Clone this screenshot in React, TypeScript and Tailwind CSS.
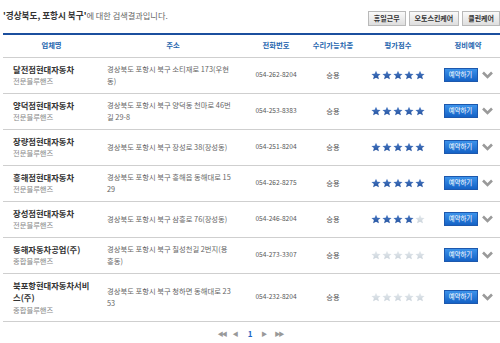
import { useId } from 'react';

type Shop = {
  name: string;
  kind: string;
  addr: string[];
  tel: string;
  car: string;
  stars: number;
};

const shops: Shop[] = [
  { name: '달전점현대자동차', kind: '전문블루핸즈', addr: ['경상북도 포항시 북구 소티재로 173(우현', '동)'], tel: '054-262-8204', car: '승용', stars: 5 },
  { name: '양덕점현대자동차', kind: '전문블루핸즈', addr: ['경상북도 포항시 북구 양덕동 천마로 46번', '길 29-8'], tel: '054-253-8383', car: '승용', stars: 5 },
  { name: '장량점현대자동차', kind: '전문블루핸즈', addr: ['경상북도 포항시 북구 장성로 38(장성동)'], tel: '054-251-8204', car: '승용', stars: 5 },
  { name: '흥해점현대자동차', kind: '전문블루핸즈', addr: ['경상북도 포항시 북구 흥해읍 동해대로 15', '29'], tel: '054-262-8275', car: '승용', stars: 5 },
  { name: '장성점현대자동차', kind: '전문블루핸즈', addr: ['경상북도 포항시 북구 삼흥로 76(장성동)'], tel: '054-246-8204', car: '승용', stars: 4 },
  { name: '동해자동차공업(주)', kind: '종합블루핸즈', addr: ['경상북도 포항시 북구 칠성천길 2번지(용', '흥동)'], tel: '054-273-3307', car: '승용', stars: 0 },
  { name: '북포항현대자동차서비', kind: '종합블루핸즈', addr: ['경상북도 포항시 북구 청하면 동해대로 23', '53'], tel: '054-232-8204', car: '승용', stars: 0 },
];

function Star({ on }: { on: boolean }) {
  const id = useId();
  return (
    <svg width="10" height="10" viewBox="0 0 24 24">
      <defs>
        <linearGradient id={id} x1="0" y1="0" x2="0" y2="1">
          <stop offset="0" stopColor={on ? '#4f7fc8' : '#e6ebef'} />
          <stop offset="1" stopColor={on ? '#21509e' : '#c9d2da'} />
        </linearGradient>
      </defs>
      <path
        d="M12 1.5l3.2 7.2 7.8.7-5.9 5.2 1.8 7.7L12 18.3l-6.9 4 1.8-7.7L1 9.4l7.8-.7z"
        fill={`url(#${id})`}
      />
    </svg>
  );
}

function Chevron() {
  return (
    <svg width="11" height="8" viewBox="0 0 11 8">
      <path d="M1 1.5l4.5 4.5L10 1.5" fill="none" stroke="#9a9a9a" strokeWidth="2.6" />
    </svg>
  );
}

function TopButton({ label }: { label: string }) {
  return (
    <button className="h-[15px] px-[5px] border border-[#b9b9b9] bg-gradient-to-b from-[#fafafa] to-[#dedede] text-[7px] font-bold text-[#333] leading-none">
      {label}
    </button>
  );
}

export default function App() {
  return (
    <div
      className="w-[500px] h-[343px] bg-white overflow-hidden"
      style={{ fontFamily: '"Noto Sans CJK KR", "Noto Sans", sans-serif' }}
    >
      {/* title + filter buttons */}
      <div className="flex items-start justify-between pl-[3px] pt-[9px] h-[33px]">
        <p className="text-[8.2px] text-[#666] leading-[12px]">
          <span className="font-bold text-[#333] text-[8.6px]">'경상북도, 포항시 북구'</span>에 대한 검색결과입니다.
        </p>
        <div className="flex gap-[3px] mt-[2px]">
          <TopButton label="휴일근무" />
          <TopButton label="오토스킨케어" />
          <TopButton label="클린케어" />
        </div>
      </div>

      {/* result table */}
      <div className="ml-[3px] border-t-2 border-[#1b4f9e]">
        <table className="w-[497px] table-fixed border-collapse">
          <colgroup>
            <col className="w-[97px]" />
            <col className="w-[146px]" />
            <col className="w-[60px]" />
            <col className="w-[54px]" />
            <col className="w-[76px]" />
            <col className="w-[64px]" />
          </colgroup>
          <thead>
            <tr className="h-[22px] border-b border-[#cfcfcf] text-[7.3px] font-bold text-[#2565ae]">
              <th className="font-bold">업체명</th>
              <th className="font-bold">주소</th>
              <th className="font-bold">전화번호</th>
              <th className="font-bold">수리가능차종</th>
              <th className="font-bold">평가점수</th>
              <th className="font-bold">정비예약</th>
            </tr>
          </thead>
          <tbody>
            {shops.map((s, i) => (
              <tr key={i} className="border-b border-[#cfcfcf] align-middle">
                <td className="pl-[10px] pr-[4px] py-[5px] leading-[12.5px]">
                  <div className="text-[8.3px] font-bold text-[#333]">
                    {i === 6 ? (
                      <>
                        북포항현대자동차서비
                        <br />
                        스(주)
                      </>
                    ) : (
                      s.name
                    )}
                  </div>
                  <div className="text-[7.3px] text-[#888]">{s.kind}</div>
                </td>
                <td className="pl-[7px] py-[5px] text-[7.3px] leading-[12.5px] text-[#666]">
                  {s.addr.map((a, k) => (
                    <div key={k} className="whitespace-nowrap">{a}</div>
                  ))}
                </td>
                <td className="text-center text-[6.6px] text-[#555]">{s.tel}</td>
                <td className="text-center text-[7.3px] text-[#555]">{s.car}</td>
                <td>
                  <div className="flex justify-center gap-[1px]">
                    {[0, 1, 2, 3, 4].map((k) => (
                      <Star key={k} on={k < s.stars} />
                    ))}
                  </div>
                </td>
                <td>
                  <div className="flex items-center justify-center gap-[4px]">
                    <button className="w-[34px] h-[14px] border border-[#1d58ad] bg-gradient-to-b from-[#3b92ea] to-[#1462c6] text-white text-[6.4px] leading-none">
                      예약하기
                    </button>
                    <Chevron />
                  </div>
                </td>
              </tr>
            ))}
          </tbody>
        </table>
      </div>

      {/* paging */}
      <div className="flex items-center justify-center gap-[7px] mt-[6px] h-[12px] leading-none text-[#999] text-[6px]">
        <span className="tracking-[-2px]">◀◀</span>
        <span>◀</span>
        <span className="text-[8px] font-bold text-[#1d64c4] px-[2px]">1</span>
        <span>▶</span>
        <span className="tracking-[-2px]">▶▶</span>
      </div>
    </div>
  );
}
